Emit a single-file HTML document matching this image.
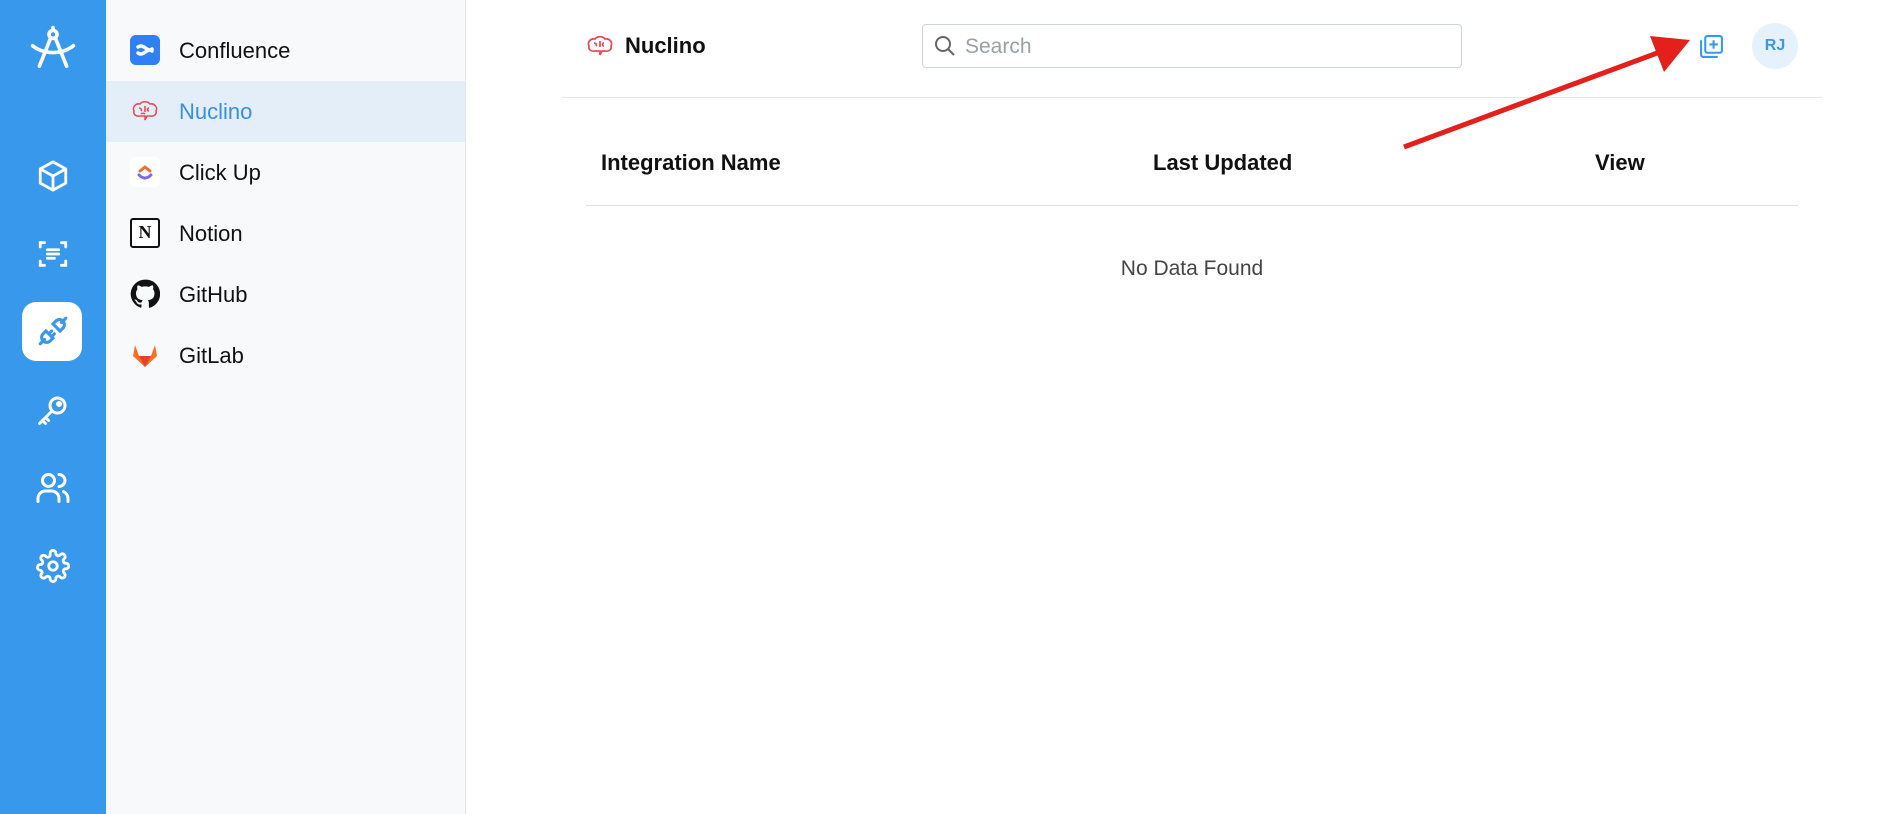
<!DOCTYPE html>
<html><head><meta charset="utf-8"><style>
*{margin:0;padding:0;box-sizing:border-box}
body{width:1882px;height:814px;overflow:hidden;background:#fff;font-family:"Liberation Sans",sans-serif;position:relative}
.rail{position:absolute;left:0;top:0;width:106px;height:814px;background:#3898ec}
.ri{position:absolute;left:53px;transform:translate(-50%,-50%)}
.side{position:absolute;left:106px;top:0;width:360px;height:814px;background:#f7f9fb;border-right:1px solid #e3e6ea}
.item{position:absolute;left:0;width:359px;height:61px;display:flex;align-items:center;font-size:22px;color:#111}
.item .ic{position:absolute;left:24px;top:15px;width:30px;height:30px}
.item span{position:absolute;left:73px}
.abs{position:absolute}
</style></head><body>
<div class="rail">
 <svg class="ri" style="top:48px" width="50" height="50" viewBox="0 0 44 44" fill="none" stroke="#fff" stroke-width="3.2" stroke-linecap="round"><circle cx="22" cy="10" r="3.5"/><path d="M22 4v2M20 13L10 38M24 13l10 25M4 20c10 8 26 8 36 0"/></svg>
 <svg class="ri" style="top:176px" width="34" height="34" viewBox="0 0 24 24" fill="none" stroke="#fff" stroke-width="2" stroke-linejoin="round"><path d="M12 2l9 5v10l-9 5-9-5V7z"/><path d="M3 7l9 5 9-5M12 12v10"/></svg>
 <svg class="ri" style="top:254px" width="34" height="34" viewBox="0 0 24 24" fill="none" stroke="#fff" stroke-width="2" stroke-linecap="round"><path d="M3 7V4h3M18 4h3v3M21 17v3h-3M6 20H3v-3M8 9h8M8 12h8M8 15h5"/></svg>
 <div class="abs" style="left:22px;top:302px;width:60px;height:59px;background:#fff;border-radius:14px"></div>
 <svg class="ri" style="top:331px" width="34" height="34" viewBox="0 0 24 24" fill="none" stroke="#3898ec" stroke-width="2.2" stroke-linecap="round"><path d="M3 21l3-3M21 3l-3 3M7 12l5 5-2 2a3.5 3.5 0 01-5-5zM17 12l-5-5 2-2a3.5 3.5 0 015 5zM9 14l2-2M11 16l2-2"/></svg>
 <svg class="ri" style="top:410px" width="36" height="36" viewBox="0 0 24 24" fill="none" stroke="#fff" stroke-width="2" stroke-linecap="round"><circle cx="15" cy="9" r="5"/><circle cx="16" cy="8" r="1"/><path d="M11 13l-8 8M5 19l2 2M7 17l2 2"/></svg>
 <svg class="ri" style="top:488px" width="36" height="36" viewBox="0 0 24 24" fill="none" stroke="#fff" stroke-width="2" stroke-linecap="round"><circle cx="9" cy="7" r="4"/><path d="M2 21v-2a5 5 0 015-5h4a5 5 0 015 5v2M16 3a4 4 0 010 8M22 21v-2a5 5 0 00-3-4.6"/></svg>
 <svg class="ri" style="top:566px" width="34" height="34" viewBox="0 0 24 24" fill="none" stroke="#fff" stroke-width="2"><circle cx="12" cy="12" r="3"/><path d="M19.4 15a1.7 1.7 0 00.3 1.800l.1.1a2 2 0 11-2.8 2.8l-.1-.1a1.7 1.7 0 00-2.9 1.2V21a2 2 0 11-4 0v-.1a1.7 1.7 0 00-2.9-1.2l-.1.1a2 2 0 11-2.8-2.8l.1-.1A1.7 1.7 0 003 15H3a2 2 0 110-4h.1a1.7 1.7 0 001.2-2.9l-.1-.1a2 2 0 112.8-2.8l.1.1A1.7 1.7 0 0010 4V3a2 2 0 114 0v.1a1.7 1.7 0 002.9 1.2l.1-.1a2 2 0 112.8 2.8l-.1.1A1.7 1.7 0 0021 10h.1a2 2 0 110 4H21a1.7 1.7 0 00-1.6 1z"/></svg>
</div>
<div class="side">
 <div class="item" style="top:20px"><div class="ic" style="background:#2f80f5;border-radius:6px"><svg width="30" height="30" viewBox="0 0 30 30" fill="none" stroke="#fff" stroke-width="3.5" stroke-linecap="round"><path d="M8 12c6-4 9 6 14 2M8 18c6 4 9-6 14-2"/></svg></div><span>Confluence</span></div>
 <div class="item" style="top:81px;background:#e3eef8;color:#3a8ee6"><svg class="ic" viewBox="0 0 30 30" fill="none" stroke="#e5505a" stroke-width="1.6"><path d="M4 15c-2-4 2-8 6-7 2-3 8-3 10 0 4-1 8 3 6 7 1 3-2 6-6 5h-3l-2 4v-4h-5c-4 1-7-2-6-5z"/><path d="M9 12c2 0 3 2 2 3M15 10v6M19 12c-2 0-2 3 0 3M11 18c1-1 3-1 4 0"/></svg><span>Nuclino</span></div>
 <div class="item" style="top:142px"><div class="ic" style="background:#fff;border-radius:6px"><svg width="30" height="30" viewBox="0 0 30 30" fill="none" stroke-width="3" stroke-linecap="round"><path d="M10 14l5-4 5 4" stroke="#f36d3c"/><path d="M9 18c4 4 8 4 12 0" stroke="#7b68ee"/></svg></div><span>Click Up</span></div>
 <div class="item" style="top:203px"><div class="ic" style="border:2.5px solid #111;border-radius:3px;background:#fff;font:bold 18px 'Liberation Serif',serif;text-align:center;line-height:25px">N</div><span>Notion</span></div>
 <div class="item" style="top:264px"><svg class="ic" viewBox="0 0 24 24"><path fill="#111" d="M12 .5a11.5 11.5 0 00-3.6 22.4c.6.1.8-.3.8-.6v-2c-3.2.7-3.900-1.500-3.900-1.500-.5-1.300-1.300-1.700-1.300-1.700-1-.7.1-.7.1-.7 1.200.1 1.800 1.200 1.800 1.200 1 1.800 2.800 1.300 3.500 1 .1-.8.4-1.300.7-1.600-2.600-.3-5.300-1.300-5.300-5.700 0-1.300.5-2.300 1.200-3.100-.1-.3-.5-1.500.1-3.100 0 0 1-.3 3.200 1.200a11 11 0 015.800 0c2.200-1.500 3.200-1.200 3.200-1.200.6 1.600.2 2.800.1 3.100.7.8 1.200 1.800 1.200 3.100 0 4.400-2.700 5.400-5.300 5.700.4.4.8 1.100.8 2.200v3.200c0 .3.2.7.8.6A11.5 11.5 0 0012 .5z"/></svg><span>GitHub</span></div>
 <div class="item" style="top:325px"><svg class="ic" viewBox="0 0 30 30"><path fill="#fc6d26" d="M15 27L3 16l2-11 4 11h12l4-11 2 11z"/><path fill="#e24329" d="M15 27L9 16h12z"/></svg><span>GitLab</span></div>
</div>
<svg class="abs" style="left:584px;top:31px" width="32" height="30" viewBox="0 0 30 30" fill="none" stroke="#e5505a" stroke-width="1.8"><path d="M4 15c-2-4 2-8 6-7 2-3 8-3 10 0 4-1 8 3 6 7 1 3-2 6-6 5h-3l-2 4v-4h-5c-4 1-7-2-6-5z"/><path d="M9 12c2 0 3 2 2 3M15 10v6M19 12c-2 0-2 3 0 3"/></svg>
<div class="abs" style="left:625px;top:33px;font-size:22px;font-weight:bold;color:#111">Nuclino</div>
<div class="abs" style="left:922px;top:24px;width:540px;height:44px;border:1px solid #cfd4da;border-radius:4px"></div>
<svg class="abs" style="left:933px;top:34px" width="24" height="24" viewBox="0 0 24 24" fill="none" stroke="#666" stroke-width="2"><circle cx="10" cy="10" r="7"/><path d="M15 15l6 6"/></svg>
<div class="abs" style="left:965px;top:35px;font-size:21px;color:#9aa0a6">Search</div>
<div class="abs" style="left:562px;top:97px;width:1260px;height:1px;background:#e6e8eb"></div>
<svg class="abs" style="left:1699px;top:34px" width="25" height="25" viewBox="0 0 24 24" fill="none" stroke="#3898ec" stroke-width="2"><rect x="6" y="2" width="16" height="16" rx="2"/><path d="M2 6v14a2 2 0 002 2h14M14 6v8M10 10h8"/></svg>
<div class="abs" style="left:1752px;top:23px;width:46px;height:46px;border-radius:50%;background:#e5f1fc;color:#3898ec;font-size:16px;font-weight:bold;text-align:center;line-height:46px">RJ</div>
<svg class="abs" style="left:0;top:0" width="1882" height="814"><line x1="1404" y1="147" x2="1660" y2="52" stroke="#e3201b" stroke-width="5"/><polygon points="1690,40 1650,36 1664,72" fill="#e3201b"/></svg>
<div class="abs" style="left:601px;top:150px;font-size:22px;font-weight:bold;color:#111">Integration Name</div>
<div class="abs" style="left:1153px;top:150px;font-size:22px;font-weight:bold;color:#111">Last Updated</div>
<div class="abs" style="left:1595px;top:150px;font-size:22px;font-weight:bold;color:#111">View</div>
<div class="abs" style="left:586px;top:205px;width:1212px;height:1px;background:#dfe2e6"></div>
<div class="abs" style="left:1092px;top:257px;width:200px;text-align:center;font-size:21px;color:#444">No Data Found</div>
</body></html>
